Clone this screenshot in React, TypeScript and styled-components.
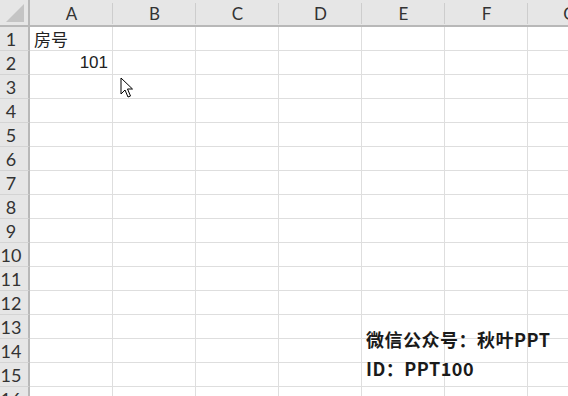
import * as React from "react";
import styled, { createGlobalStyle } from "styled-components";

const GlobalStyle = createGlobalStyle`
  html, body {
    margin: 0;
    padding: 0;
    background: #ffffff;
    overflow: hidden;
  }
`;

const COLS = ["A", "B", "C", "D", "E", "F", "G"];
const COL_WIDTHS = [83, 83, 83, 83, 83, 83, 83];
const ROW_COUNT = 16;

const Page = styled.div`
  position: relative;
  width: 568px;
  height: 396px;
  overflow: hidden;
  font-family: "Lato", "Liberation Sans", "Noto Sans CJK SC", sans-serif;
`;

const Sheet = styled.div`
  display: grid;
  grid-template-columns: 30px ${COL_WIDTHS.map(w => `${w}px`).join(" ")};
  grid-template-rows: 27px repeat(${ROW_COUNT}, 24px);
`;

const Corner = styled.div`
  background: #e6e6e6;
  border-right: 2px solid #b8b8b8;
  border-bottom: 2px solid #b8b8b8;
  display: flex;
  align-items: flex-end;
  justify-content: flex-end;
  padding: 0 4px 3px 0;
`;

const ColHeader = styled.div`
  position: relative;
  background: #e6e6e6;
  border-bottom: 2px solid #b8b8b8;
  display: flex;
  align-items: center;
  justify-content: center;
  font-size: 17px;
  color: #333;
  padding-top: 1px;

  &::after {
    content: "";
    position: absolute;
    right: 0;
    top: 3px;
    bottom: 1px;
    width: 1px;
    background: #cdcdcd;
  }
`;

const RowHeader = styled.div`
  background: #e6e6e6;
  border-right: 2px solid #b8b8b8;
  border-bottom: 1px solid #d4d4d4;
  display: flex;
  align-items: center;
  justify-content: center;
  padding-right: 6px;
  font-size: 18px;
  color: #333;
`;

const Cell = styled.div<{ $align?: "left" | "right" }>`
  border-right: 1px solid #dedede;
  border-bottom: 1px solid #dedede;
  display: flex;
  align-items: center;
  justify-content: ${p => (p.$align === "right" ? "flex-end" : "flex-start")};
  padding: 0 4px;
  font-family: "Liberation Sans", "Noto Sans CJK SC", sans-serif;
  font-size: 17px;
  color: #222;
  white-space: nowrap;
`;

const Watermark = styled.div`
  position: absolute;
  left: 366px;
  top: 325px;
  font-family: "Noto Sans CJK SC", sans-serif;
  font-size: 18px;
  font-weight: 600;
  letter-spacing: 0.5px;
  line-height: 29px;
  color: #1a1a1a;
`;

const Pointer = styled.svg`
  position: absolute;
  left: 120px;
  top: 77px;
`;

const cells: Record<string, { text: string; align?: "left" | "right" }> = {
  "1A": { text: "房号" },
  "2A": { text: "101", align: "right" },
};

export default function App() {
  const rows = Array.from({ length: ROW_COUNT }, (_, i) => i + 1);
  return (
    <Page>
      <GlobalStyle />
      <Sheet>
        <Corner>
          <svg width="18" height="18" viewBox="0 0 18 18">
            <polygon points="18,0 18,18 0,18" fill="#c4c4c4" />
          </svg>
        </Corner>
        {COLS.map(c => (
          <ColHeader key={c}>{c}</ColHeader>
        ))}
        {rows.map(r => (
          <React.Fragment key={r}>
            <RowHeader>{r}</RowHeader>
            {COLS.map(c => {
              const cell = cells[`${r}${c}`];
              return (
                <Cell key={c} $align={cell?.align}>
                  {cell?.text}
                </Cell>
              );
            })}
          </React.Fragment>
        ))}
      </Sheet>
      <Watermark>
        <div>微信公众号：秋叶PPT</div>
        <div>ID：PPT100</div>
      </Watermark>
      <Pointer width="14" height="22" viewBox="0 0 14 22">
        <path
          d="M1 1 L1 17 L5 13 L8 20 L10.5 19 L7.5 12 L12.5 12 Z"
          fill="#ffffff"
          stroke="#000000"
          strokeWidth="1"
          strokeLinejoin="miter"
        />
      </Pointer>
    </Page>
  );
}
